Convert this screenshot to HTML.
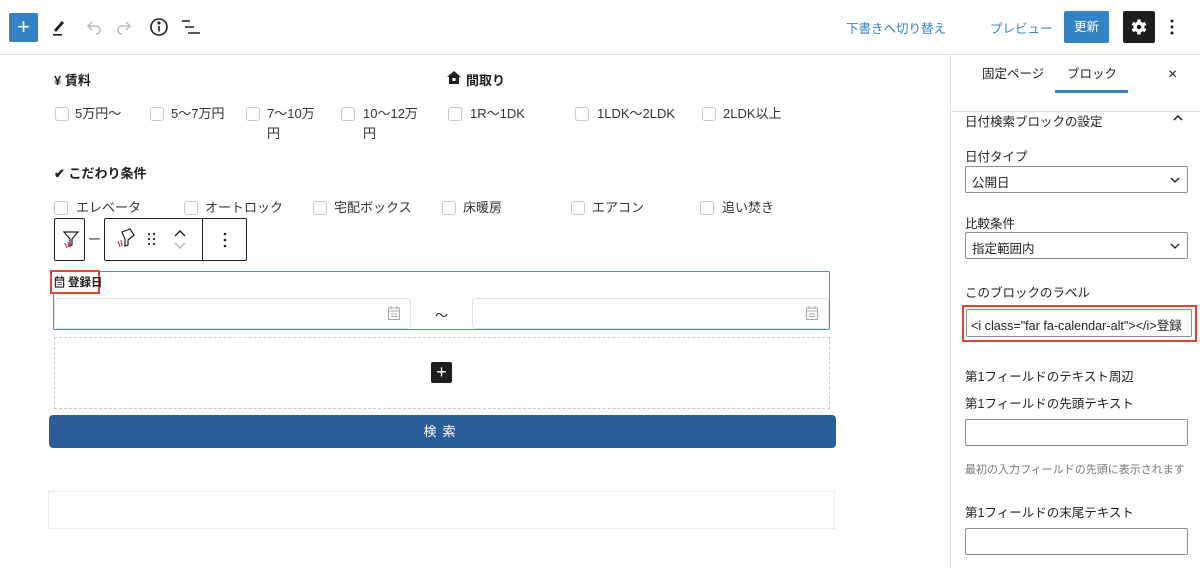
<!DOCTYPE html>
<html><head><meta charset="utf-8"><style>
*{box-sizing:border-box;margin:0;padding:0}
body{width:1200px;height:568px;overflow:hidden;background:#fff;font-family:"Liberation Sans","Noto Sans CJK JP",sans-serif;color:#1e1e1e;position:relative;font-size:13px}
.a{position:absolute}
.cb{position:absolute;width:14px;height:14px;border:1px solid #c8c8c8;border-radius:3px;background:#fff}
.t{position:absolute;font-size:13px;color:#333;white-space:nowrap;line-height:20px}
.h{position:absolute;font-size:13px;font-weight:bold;white-space:nowrap}
.sl{position:absolute;font-size:12.5px;color:#1e1e1e;white-space:nowrap}
.inp{position:absolute;border:1px solid #8c8f94;border-radius:2px;background:#fff}
</style></head><body>
<!-- header -->
<div class="a" style="left:0;top:54px;width:1200px;height:1px;background:#e0e0e0"></div>
<div class="a" style="left:9px;top:13px;width:29px;height:29px;background:#3582c4;border-radius:2px;color:#fff;font-size:22px;line-height:27px;text-align:center">+</div>
<svg class="a" style="left:48px;top:16px" width="22" height="22" viewBox="0 0 22 22"><path d="M6 14 L14 5 L16 7 L8 16 Z" fill="#1e1e1e"/><rect x="5" y="18" width="9" height="1.6" fill="#1e1e1e"/></svg>
<svg class="a" style="left:84px;top:16px" width="20" height="20" viewBox="0 0 20 20" fill="none" stroke="#bbb" stroke-width="1.5"><path d="M8 6 L4 10 L8 14 M4 10 H12 A4 4 0 0 1 12 18"/></svg>
<svg class="a" style="left:114px;top:16px" width="20" height="20" viewBox="0 0 20 20" fill="none" stroke="#bbb" stroke-width="1.5"><path d="M12 6 L16 10 L12 14 M16 10 H8 A4 4 0 0 0 8 18"/></svg>
<svg class="a" style="left:148px;top:16px" width="22" height="22" viewBox="0 0 22 22" fill="none" stroke="#1e1e1e" stroke-width="1.6"><circle cx="11" cy="11" r="8"/><path d="M11 10 V15.5"/><circle cx="11" cy="7" r="0.8" fill="#1e1e1e"/></svg>
<svg class="a" style="left:180px;top:18px" width="22" height="18" viewBox="0 0 22 18" stroke="#1e1e1e" stroke-width="1.6"><path d="M2 3 H10 M5 9 H14 M8 15 H20"/></svg>
<div class="a" style="left:846px;top:18px;font-size:12.5px;color:#3582c4">下書きへ切り替え</div>
<div class="a" style="left:990px;top:18px;font-size:12.5px;color:#3582c4">プレビュー</div>
<div class="a" style="left:1064px;top:11px;width:45px;height:32px;background:#3582c4;border-radius:2px;color:#fff;font-size:12.5px;line-height:32px;text-align:center">更新</div>
<div class="a" style="left:1123px;top:11px;width:32px;height:32px;background:#1e1e1e;border-radius:2px"></div>
<svg class="a" style="left:1129px;top:17px" width="20" height="20" viewBox="0 0 20 20"><g fill="#fff"><circle cx="10" cy="10" r="5.5"/><rect x="8.3" y="2.5" width="3.4" height="15"/><rect x="8.3" y="2.5" width="3.4" height="15" transform="rotate(60 10 10)"/><rect x="8.3" y="2.5" width="3.4" height="15" transform="rotate(120 10 10)"/></g><circle cx="10" cy="10" r="2.2" fill="#1e1e1e"/></svg>
<svg class="a" style="left:1168px;top:17px" width="8" height="20"><circle cx="4" cy="4" r="1.5" fill="#1e1e1e"/><circle cx="4" cy="10" r="1.5" fill="#1e1e1e"/><circle cx="4" cy="16" r="1.5" fill="#1e1e1e"/></svg>

<!-- content -->
<div class="h" style="left:54px;top:70px">¥ 賃料</div>
<svg class="a" style="left:447px;top:71px" width="14" height="13" viewBox="0 0 14 13"><path d="M7 0 L14 6 H12 V13 H2 V6 H0 Z" fill="#1e1e1e"/><rect x="5.5" y="7" width="3" height="3" fill="#fff"/></svg>
<div class="h" style="left:466px;top:70px">間取り</div>
<div class="cb" style="left:55px;top:107px"></div><div class="t" style="left:75px;top:104px">5万円〜</div>
<div class="cb" style="left:150px;top:107px"></div><div class="t" style="left:171px;top:104px">5〜7万円</div>
<div class="cb" style="left:246px;top:107px"></div><div class="t" style="left:267px;top:104px">7〜10万<br>円</div>
<div class="cb" style="left:341px;top:107px"></div><div class="t" style="left:363px;top:104px">10〜12万<br>円</div>
<div class="cb" style="left:448px;top:107px"></div><div class="t" style="left:470px;top:104px">1R〜1DK</div>
<div class="cb" style="left:575px;top:107px"></div><div class="t" style="left:597px;top:104px">1LDK〜2LDK</div>
<div class="cb" style="left:702px;top:107px"></div><div class="t" style="left:723px;top:104px">2LDK以上</div>

<div class="h" style="left:54px;top:163px">✔ こだわり条件</div>
<div class="cb" style="left:54px;top:201px"></div><div class="t" style="left:76px;top:198px">エレベータ</div>
<div class="cb" style="left:184px;top:201px"></div><div class="t" style="left:205px;top:198px">オートロック</div>
<div class="cb" style="left:313px;top:201px"></div><div class="t" style="left:334px;top:198px">宅配ボックス</div>
<div class="cb" style="left:442px;top:201px"></div><div class="t" style="left:463px;top:198px">床暖房</div>
<div class="cb" style="left:571px;top:201px"></div><div class="t" style="left:592px;top:198px">エアコン</div>
<div class="cb" style="left:700px;top:201px"></div><div class="t" style="left:722px;top:198px">追い焚き</div>
<div class="t" style="left:88px;top:230px">ー丿</div>

<!-- block toolbar -->
<div class="a" style="left:54px;top:218px;width:31px;height:43px;border:1px solid #1e1e1e;border-radius:2px;background:#fff"></div>
<svg class="a" style="left:60px;top:228px" width="22" height="22" viewBox="0 0 22 22" fill="none" stroke="#1e1e1e" stroke-width="1.2"><path d="M4 4 H18 L12 11 V17 L10 18 V11 Z"/><path d="M5 15 L7 20 M8 14 L9 19" stroke="#d33"/></svg>
<div class="a" style="left:104px;top:218px;width:143px;height:43px;border:1px solid #1e1e1e;border-radius:2px;background:#fff"></div>
<div class="a" style="left:202px;top:218px;width:1px;height:43px;background:#1e1e1e"></div>
<svg class="a" style="left:114px;top:226px" width="24" height="24" viewBox="0 0 24 24" fill="none" stroke="#1e1e1e" stroke-width="1.2"><path d="M8 6 L16 3 L20 9 L14 14 V19 L11 20 V13 Z"/><path d="M4 15 L6 21 M7 14 L8 20" stroke="#d33"/></svg>
<svg class="a" style="left:147px;top:232px" width="10" height="14"><g fill="#1e1e1e"><circle cx="2" cy="2" r="1.1"/><circle cx="7" cy="2" r="1.1"/><circle cx="2" cy="7" r="1.1"/><circle cx="7" cy="7" r="1.1"/><circle cx="2" cy="12" r="1.1"/><circle cx="7" cy="12" r="1.1"/></g></svg>
<svg class="a" style="left:173px;top:226px" width="14" height="26" fill="none" stroke-width="1.4"><path d="M2 10 L7 5 L12 10" stroke="#1e1e1e"/><path d="M2 17 L7 22 L12 17" stroke="#bbb"/></svg>
<svg class="a" style="left:222px;top:232px" width="6" height="16"><g fill="#1e1e1e"><circle cx="3" cy="2" r="1.3"/><circle cx="3" cy="8" r="1.3"/><circle cx="3" cy="14" r="1.3"/></g></svg>

<!-- selected block -->
<div class="a" style="left:53px;top:271px;width:777px;height:59px;border:1px solid #4a8ad0;border-radius:2px"></div>
<div class="a" style="left:54px;top:298px;width:357px;height:31px;border:1px solid #dde3e8;border-radius:4px"></div>
<div class="a" style="left:472px;top:298px;width:357px;height:31px;border:1px solid #dde3e8;border-radius:4px"></div>
<svg class="a" style="left:387px;top:305px" width="14" height="16" viewBox="0 0 14 16" fill="none" stroke="#aaa"><rect x="1.5" y="3" width="11" height="11.5"/><path d="M4 1 V4 M10 1 V4 M1.5 6 H12.5 M4 9 H10 M4 11.5 H10"/></svg>
<svg class="a" style="left:805px;top:305px" width="14" height="16" viewBox="0 0 14 16" fill="none" stroke="#aaa"><rect x="1.5" y="3" width="11" height="11.5"/><path d="M4 1 V4 M10 1 V4 M1.5 6 H12.5 M4 9 H10 M4 11.5 H10"/></svg>
<div class="a" style="left:435px;top:305px;font-size:13px">〜</div>
<div class="a" style="left:50px;top:270px;width:50px;height:24px;border:2px solid #e0452f;background:#fff"></div>
<svg class="a" style="left:54px;top:275px" width="11" height="13" viewBox="0 0 11 14" fill="none" stroke="#1e1e1e" stroke-width="1.2"><rect x="1" y="3" width="9" height="10"/><path d="M3 1 V4 M8 1 V4 M1 5.5 H10" /><path d="M3 8 H8 M3 10.5 H8" stroke-width="0.8"/></svg>
<div class="h" style="left:68px;top:274px;font-size:11.5px">登録日</div>

<div class="a" style="left:54px;top:337px;width:776px;height:72px;border:1px dashed #ccc"></div>
<div class="a" style="left:431px;top:362px;width:21px;height:21px;background:#1e1e1e;border-radius:2px;color:#fff;font-size:18px;line-height:20px;text-align:center">+</div>
<div class="a" style="left:49px;top:415px;width:787px;height:33px;background:#2c5d9b;border-radius:4px;color:#fff;font-size:13px;line-height:33px;text-align:center;letter-spacing:6px">検索</div>
<div class="a" style="left:48px;top:491px;width:787px;height:38px;border:1px dotted #ddd"></div>

<!-- sidebar -->
<div class="a" style="left:950px;top:55px;width:1px;height:513px;background:#e0e0e0"></div>
<div class="a" style="left:951px;top:111px;width:249px;height:1px;background:#e0e0e0"></div>
<div class="a" style="left:982px;top:63px;font-size:12.5px">固定ページ</div>
<div class="a" style="left:1067px;top:63px;font-size:12.5px">ブロック</div>
<div class="a" style="left:1055px;top:90px;width:73px;height:3px;background:#3582c4"></div>
<div class="a" style="left:1168px;top:66px;font-size:16px">×</div>
<div class="sl" style="left:965px;top:111px">日付検索ブロックの設定</div>
<svg class="a" style="left:1172px;top:114px" width="12" height="8"><path d="M2 6 L6 2 L10 6" fill="none" stroke="#1e1e1e" stroke-width="1.5"/></svg>
<div class="sl" style="left:965px;top:146px">日付タイプ</div>
<div class="inp" style="left:965px;top:166px;width:223px;height:27px"></div>
<div class="sl" style="left:972px;top:172px">公開日</div>
<svg class="a" style="left:1170px;top:177px" width="10" height="6"><path d="M1 1 L5 5 L9 1" fill="none" stroke="#1e1e1e" stroke-width="1.3"/></svg>
<div class="sl" style="left:965px;top:213px">比較条件</div>
<div class="inp" style="left:965px;top:232px;width:223px;height:27px"></div>
<div class="sl" style="left:972px;top:238px">指定範囲内</div>
<svg class="a" style="left:1170px;top:243px" width="10" height="6"><path d="M1 1 L5 5 L9 1" fill="none" stroke="#1e1e1e" stroke-width="1.3"/></svg>
<div class="sl" style="left:965px;top:282px">このブロックのラベル</div>
<div class="a" style="left:962px;top:305px;width:235px;height:37px;border:2px solid #e0452f"></div>
<div class="inp" style="left:966px;top:309px;width:226px;height:28px;overflow:hidden"></div>
<div class="sl" style="left:971px;top:315px;font-size:12.6px">&lt;i class="far fa-calendar-alt"&gt;&lt;/i&gt;登録</div>
<div class="sl" style="left:965px;top:366px">第1フィールドのテキスト周辺</div>
<div class="sl" style="left:965px;top:393px">第1フィールドの先頭テキスト</div>
<div class="inp" style="left:965px;top:419px;width:223px;height:27px"></div>
<div class="sl" style="left:965px;top:461px;font-size:11px;color:#757575">最初の入力フィールドの先頭に表示されます</div>
<div class="sl" style="left:965px;top:502px">第1フィールドの末尾テキスト</div>
<div class="inp" style="left:965px;top:528px;width:223px;height:27px"></div>
</body></html>
